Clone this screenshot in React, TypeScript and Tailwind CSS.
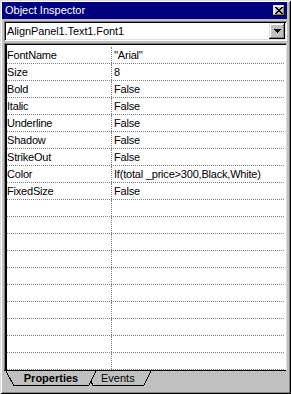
import React from 'react';

const props: { name: string; value: string }[] = [
  { name: 'FontName', value: "''Arial''" },
  { name: 'Size', value: '8' },
  { name: 'Bold', value: 'False' },
  { name: 'Italic', value: 'False' },
  { name: 'Underline', value: 'False' },
  { name: 'Shadow', value: 'False' },
  { name: 'StrikeOut', value: 'False' },
  { name: 'Color', value: 'If(total _price>300,Black,White)' },
  { name: 'FixedSize', value: 'False' },
];

const rows = [...props, ...Array.from({ length: 10 }, () => ({ name: '', value: '' }))];

const raised =
  'shadow-[inset_-1px_-1px_0_#000,inset_1px_1px_0_#dfdfdf,inset_-2px_-2px_0_#808080,inset_2px_2px_0_#fff]';

const CloseIcon = () => (
  <svg width="8" height="7" viewBox="0 0 8 7" shapeRendering="crispEdges">
    <path
      fill="#000"
      d="M0 0h2v1h-2z M6 0h2v1h-2z M1 1h2v1h-2z M5 1h2v1h-2z M2 2h4v1h-4z M3 3h2v1h-2z M2 4h4v1h-4z M1 5h2v1h-2z M5 5h2v1h-2z M0 6h2v1h-2z M6 6h2v1h-2z"
    />
  </svg>
);

const ArrowDown = () => (
  <svg width="7" height="4" viewBox="0 0 7 4" shapeRendering="crispEdges">
    <path fill="#000" d="M0 0h7v1h-7z M1 1h5v1h-5z M2 2h3v1h-3z M3 3h1v1h-1z" />
  </svg>
);

export default function App() {
  return (
    <div className="w-[291px] h-[394px] bg-[#c0c0c0] flex flex-col pl-[2px] pr-[4px] pt-[2px] font-['Liberation_Sans',Arial,sans-serif] text-[11px] text-black shadow-[inset_1px_1px_0_#dfdfdf,inset_-1px_-1px_0_#000,inset_2px_2px_0_#fff,inset_-2px_-2px_0_#808080] overflow-hidden">
      {/* title */}
      <div className="h-[17px] bg-[#000080] flex items-center justify-between pl-[3px] pr-[2px] shrink-0">
        <span className="text-white leading-none">Object Inspector</span>
        <div className={`w-[12px] h-[11px] bg-[#c0c0c0] flex items-center justify-center ${raised}`}>
          <CloseIcon />
        </div>
      </div>

      {/* object combo */}
      <div className="mt-[2px] ml-[2px] h-[20px] bg-white flex items-center justify-between shrink-0 shadow-[inset_1px_1px_0_#808080,inset_-1px_-1px_0_#fff,inset_2px_2px_0_#000,inset_-2px_-2px_0_#dfdfdf] pl-[2px] pr-[2px]">
        <span className="pl-[1px] leading-none tracking-[-0.1px]">AlignPanel1.Text1.Font1</span>
        <div className={`w-[16px] h-[16px] bg-[#c0c0c0] flex items-center justify-center ${raised}`}>
          <ArrowDown />
        </div>
      </div>

      {/* property grid */}
      <div className="mt-[2px] ml-[2px] flex-1 min-h-0 bg-white border-t border-l border-[#808080] border-r border-r-[#dfdfdf] overflow-hidden">
        <div className="h-full border-t border-l-2 border-black pt-[2px] pr-[2px] tracking-[-0.2px]">
          {rows.map((r, i) => (
            <div key={i} className="h-[17px] flex border-b border-dotted border-[#808080]">
              <div className="w-[105px] flex items-center border-r border-dotted border-[#808080] shrink-0">
                <span className="leading-none">{r.name}</span>
              </div>
              <div className="flex-1 flex items-center pl-[2px]">
                <span className="leading-none whitespace-nowrap">{r.value}</span>
              </div>
            </div>
          ))}
        </div>
      </div>

      {/* tabs */}
      <div className="ml-[2px] mr-[1px] h-[16px] border-t border-black flex shrink-0">
        <svg width="10" height="15" viewBox="0 0 10 15" shapeRendering="crispEdges" className="shrink-0">
          <path d="M2 0 L10 15" stroke="#000" strokeWidth="1" fill="none" />
        </svg>
        <div className="w-[74px] h-[15px] border-b border-black flex items-center justify-center font-bold">
          <span className="leading-none">Properties</span>
        </div>
        <svg width="9" height="15" viewBox="0 0 9 15" shapeRendering="crispEdges" className="shrink-0">
          <path d="M0.5 15 L8 0" stroke="#000" strokeWidth="1" fill="none" />
          <path d="M3 10 L5 15" stroke="#000" strokeWidth="1" fill="none" />
          <path d="M4 14.5 H9" stroke="#000" strokeWidth="1" fill="none" />
        </svg>
        <div className="w-[46px] h-[15px] border-b border-black flex items-center pl-[4px]">
          <span className="leading-none">Events</span>
        </div>
        <svg width="9" height="15" viewBox="0 0 9 15" shapeRendering="crispEdges" className="shrink-0">
          <path d="M0.5 15 L8 0" stroke="#000" strokeWidth="1" fill="none" />
        </svg>
      </div>
      <div className="h-[8px] shrink-0" />
    </div>
  );
}
